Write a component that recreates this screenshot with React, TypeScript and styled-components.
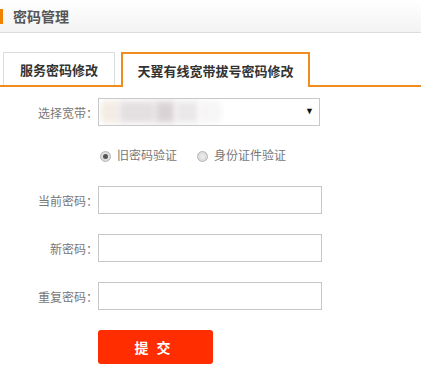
import React from 'react'
import styled, { createGlobalStyle } from 'styled-components'

const GlobalStyle = createGlobalStyle`
  body {
    margin: 0;
    background: #fff;
    font-family: "Liberation Sans", "Noto Sans CJK SC", sans-serif;
  }
`

const Page = styled.div`
  width: 421px;
  height: 384px;
  overflow: hidden;
`

const Header = styled.div`
  height: 32px;
  display: flex;
  align-items: center;
  gap: 10px;
  background: linear-gradient(to bottom, #ffffff, #f3f3f3);
  border-bottom: 1px solid #dcdcdc;
`

const Mark = styled.span`
  width: 3px;
  height: 15px;
  background: #f08200;
`

const Title = styled.h1`
  margin: 0;
  font-size: 14px;
  font-weight: bold;
  color: #555;
`

const TabBar = styled.div`
  display: flex;
  align-items: flex-end;
  margin-top: 19px;
  padding-left: 3px;
  border-bottom: 2px solid #f08c1e;
  height: 33px;
`

const Tab = styled.div<{ $active?: boolean }>`
  height: ${p => (p.$active ? '35px' : '33px')};
  box-sizing: border-box;
  display: flex;
  align-items: center;
  justify-content: center;
  white-space: nowrap;
  font-size: 13px;
  font-weight: bold;
  color: #333;
  background: #fff;
  margin-bottom: ${p => (p.$active ? '-2px' : '0')};
  border: ${p => (p.$active ? '2px solid #f08c1e' : '1px solid #dcdcdc')};
  border-bottom: none;
  padding: 0;
  margin-right: ${p => (p.$active ? '0' : '6px')};
  width: ${p => (p.$active ? '189px' : '112px')};
`

const Form = styled.div`
  padding-top: 11px;
`

const Row = styled.div<{ $gap?: number }>`
  display: flex;
  align-items: center;
  margin-bottom: ${p => p.$gap ?? 20}px;
`

const Label = styled.label`
  width: 98px;
  text-align: right;
  font-size: 12px;
  color: #777;
  white-space: nowrap;
`

const SelectBox = styled.div`
  position: relative;
  width: 222px;
  height: 28px;
  box-sizing: border-box;
  border: 1px solid #c8c8c8;
  overflow: hidden;
  display: flex;
  align-items: center;
  padding-left: 2px;
`

const Blur = styled.span<{ $w: number; $c: string }>`
  width: ${p => p.$w}px;
  height: 22px;
  background: ${p => p.$c};
  filter: blur(3px);
`

const Arrow = styled.span`
  position: absolute;
  right: 5px;
  top: 7px;
  font-size: 9px;
  color: #111;
`

const RadioGroup = styled.div`
  display: flex;
  align-items: center;
  margin-left: 100px;
  gap: 20px;
`

const RadioItem = styled.label`
  display: flex;
  align-items: center;
  gap: 6px;
  font-size: 12px;
  color: #777;
  line-height: 14px;
`

const RadioDot = styled.span<{ $checked?: boolean }>`
  width: 9px;
  height: 9px;
  border-radius: 50%;
  border: 1px solid #b5b5b5;
  background: radial-gradient(circle, #eeeeee, #d2d2d2);
  display: flex;
  align-items: center;
  justify-content: center;
  &::after {
    content: '';
    width: 5px;
    height: 5px;
    border-radius: 50%;
    background: ${p => (p.$checked ? '#555' : 'transparent')};
  }
`

const Input = styled.input`
  width: 224px;
  height: 28px;
  box-sizing: border-box;
  border: 1px solid #c8c8c8;
  margin: 0;
  padding: 0 6px;
  outline: none;
`

const Submit = styled.button`
  margin-left: 98px;
  width: 115px;
  height: 34px;
  border: none;
  border-radius: 3px;
  background: #ff2d00;
  color: #fff;
  font-size: 14px;
  font-weight: bold;
  letter-spacing: 8px;
  padding-left: 8px;
  font-family: "Noto Sans CJK SC", sans-serif;
`

export default function App() {
  return (
    <Page>
      <GlobalStyle />
      <Header>
        <Mark />
        <Title>密码管理</Title>
      </Header>
      <TabBar>
        <Tab>服务密码修改</Tab>
        <Tab $active>天翼有线宽带拔号密码修改</Tab>
      </TabBar>
      <Form>
        <Row $gap={23}>
          <Label>选择宽带：</Label>
          <SelectBox>
            <Blur $w={18} $c="#f4ebe3" />
            <Blur $w={36} $c="#e4dfe1" />
            <Blur $w={20} $c="#d9d3d6" />
            <Blur $w={24} $c="#ebe8e9" />
            <Blur $w={22} $c="#f7f6f6" />
            <Arrow>▼</Arrow>
          </SelectBox>
        </Row>
        <Row $gap={23}>
          <RadioGroup>
            <RadioItem>
              <RadioDot $checked />
              旧密码验证
            </RadioItem>
            <RadioItem>
              <RadioDot />
              身份证件验证
            </RadioItem>
          </RadioGroup>
        </Row>
        <Row>
          <Label>当前密码：</Label>
          <Input type="password" />
        </Row>
        <Row>
          <Label>新密码：</Label>
          <Input type="password" />
        </Row>
        <Row>
          <Label>重复密码：</Label>
          <Input type="password" />
        </Row>
        <Submit>提交</Submit>
      </Form>
    </Page>
  )
}
